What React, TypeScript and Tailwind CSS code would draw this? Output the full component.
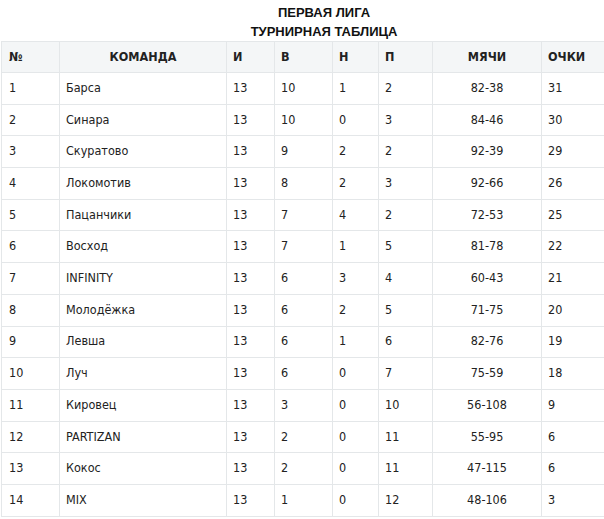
const rows: [string, string, string, string, string, string, string, string][] = [
  ["1", "Барса", "13", "10", "1", "2", "82-38", "31"],
  ["2", "Синара", "13", "10", "0", "3", "84-46", "30"],
  ["3", "Скуратово", "13", "9", "2", "2", "92-39", "29"],
  ["4", "Локомотив", "13", "8", "2", "3", "92-66", "26"],
  ["5", "Пацанчики", "13", "7", "4", "2", "72-53", "25"],
  ["6", "Восход", "13", "7", "1", "5", "81-78", "22"],
  ["7", "INFINITY", "13", "6", "3", "4", "60-43", "21"],
  ["8", "Молодёжка", "13", "6", "2", "5", "71-75", "20"],
  ["9", "Левша", "13", "6", "1", "6", "82-76", "19"],
  ["10", "Луч", "13", "6", "0", "7", "75-59", "18"],
  ["11", "Кировец", "13", "3", "0", "10", "56-108", "9"],
  ["12", "PARTIZAN", "13", "2", "0", "11", "55-95", "6"],
  ["13", "Кокос", "13", "2", "0", "11", "47-115", "6"],
  ["14", "MIX", "13", "1", "0", "12", "48-106", "3"],
];

const widths = ["w-[58px]", "w-[167px]", "w-[48px]", "w-[58px]", "w-[46px]", "w-[54px]", "w-[109px]", "w-[63px]"];

export default function App() {
  return (
    <div className="h-[519px] w-[604px] overflow-hidden bg-white font-['DejaVu_Sans_Condensed','DejaVu_Sans',sans-serif] text-[12.5px] text-[#222]">
      <div className="pl-[44px] pt-[3px] text-center font-['Liberation_Sans',Arial,sans-serif] text-[13px] font-bold leading-[19px] text-[#111]">
        <p>ПЕРВАЯ ЛИГА</p>
        <p>ТУРНИРНАЯ ТАБЛИЦА</p>
      </div>
      <table className="ml-px w-[603px] table-fixed border-collapse">
        <colgroup>
          {widths.map((w, i) => (
            <col className={w} key={i} />
          ))}
        </colgroup>
        <thead>
          <tr className="h-[31px] bg-[#f4f6f7]">
            <th className="border border-[#e4e7e9] pl-[7px] text-left font-bold">№</th>
            <th className="border border-[#e4e7e9] text-center font-bold">КОМАНДА</th>
            <th className="border border-[#e4e7e9] pl-[6px] text-left font-bold">И</th>
            <th className="border border-[#e4e7e9] pl-[6px] text-left font-bold">В</th>
            <th className="border border-[#e4e7e9] pl-[6px] text-left font-bold">Н</th>
            <th className="border border-[#e4e7e9] pl-[6px] text-left font-bold">П</th>
            <th className="border border-[#e4e7e9] text-center font-bold">МЯЧИ</th>
            <th className="border border-[#e4e7e9] pl-[6px] text-left font-bold">ОЧКИ</th>
          </tr>
        </thead>
        <tbody>
          {rows.map((r) => (
            <tr className="h-[31.7px]" key={r[0]}>
              <td className="border border-[#e4e7e9] pl-[7px]">{r[0]}</td>
              <td className="border border-[#e4e7e9] pl-[6px]">{r[1]}</td>
              <td className="border border-[#e4e7e9] pl-[6px]">{r[2]}</td>
              <td className="border border-[#e4e7e9] pl-[6px]">{r[3]}</td>
              <td className="border border-[#e4e7e9] pl-[6px]">{r[4]}</td>
              <td className="border border-[#e4e7e9] pl-[6px]">{r[5]}</td>
              <td className="border border-[#e4e7e9] text-center">{r[6]}</td>
              <td className="border border-[#e4e7e9] pl-[6px]">{r[7]}</td>
            </tr>
          ))}
        </tbody>
      </table>
    </div>
  );
}
